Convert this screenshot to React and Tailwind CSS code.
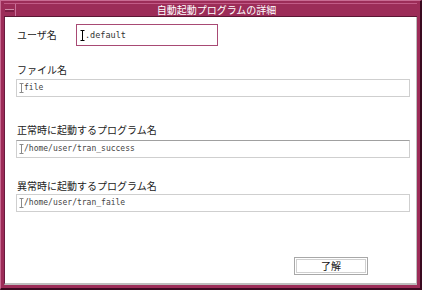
import React from "react";

const cjk = { fontFamily: '"Noto Sans CJK JP", "Noto Sans", sans-serif' };
const mono = { fontFamily: '"DejaVu Sans Mono", "Liberation Mono", monospace' };

function Beam({ color = "#000", h = 11 }) {
  return (
    <svg width="5" height={h} viewBox={`0 0 5 ${h}`} className="shrink-0">
      <path d={`M0.5 0.5H4.5M2.5 0.5V${h - 0.5}M0.5 ${h - 0.5}H4.5`} stroke={color} strokeWidth="1" fill="none" />
    </svg>
  );
}

function Field({ value, top }) {
  return (
    <div
      className={`ml-[11px] mr-[6px] h-[18px] flex items-center pl-[2px] bg-white border border-[#cfcfcf] ${top}`}
    >
      <Beam color="#8a8a8a" h={10} />
      <span className="text-[8px] text-[#444] leading-none" style={mono}>
        {value}
      </span>
    </div>
  );
}

export default function App() {
  return (
    <div className="w-[422px] h-[290px] flex flex-col bg-[#9c2c58] border-t border-l border-[#c86a92] border-r-[2px] border-b-[2px] border-r-[#3a0a20] border-b-[#3a0a20] pl-[3px] pr-[3px] pt-[2px] pb-[3px]">
      {/* title bar */}
      <div className="h-[14px] flex border-t border-[#c25a86] border-b border-b-[#5a1634] bg-[#9c2c58]">
        <div className="w-[12px] flex items-center justify-center border-r border-[#c8709a]">
          <div className="w-[9px] h-[3px] bg-[#7c1c44] border-t border-[#d08aa8]" />
        </div>
        <div className="flex-1 flex items-center justify-center text-white text-[10px] leading-none" style={cjk}>
          自動起動プログラムの詳細
        </div>
      </div>
      {/* content */}
      <div className="flex-1 flex flex-col bg-white border-l border-[#6a1a40] border-b-[2px] border-b-[#bdbdbd] border-r border-r-[#bdbdbd]">
        <div className="flex items-center mt-[7px] pl-[12px]">
          <span className="w-[59px] text-[10px] text-[#222] leading-none" style={cjk}>
            ユーザ名
          </span>
          <div className="w-[142px] h-[22px] flex items-center pl-[3px] border border-[#a84a74] bg-white">
            <Beam color="#000" h={11} />
            <span className="text-[8.5px] text-[#333] leading-none" style={mono}>
              .default
            </span>
          </div>
        </div>

        <div className="mt-[18px] pl-[12px] h-[12px] flex items-center text-[10px] text-[#222] leading-none" style={cjk}>
          ファイル名
        </div>
        <Field value="file" top="mt-[3px]" />

        <div className="mt-[27px] pl-[12px] h-[12px] flex items-center text-[10px] text-[#222] leading-none" style={cjk}>
          正常時に起動するプログラム名
        </div>
        <Field value="/home/user/tran_success" top="mt-[4px] border-t-[#a0a0a0]" />

        <div className="mt-[22px] pl-[12px] h-[12px] flex items-center text-[10px] text-[#222] leading-none" style={cjk}>
          異常時に起動するプログラム名
        </div>
        <Field value="/home/user/tran_faile" top="mt-[2px]" />

        <div className="flex justify-end mt-[45px] pr-[48px]">
          <div className="w-[74px] h-[18px] border border-[#a8a8a8] p-[1px] bg-white">
            <div className="w-full h-full border border-[#d0d0d0] flex items-center justify-center text-[10px] text-[#111] leading-none" style={cjk}>
              了解
            </div>
          </div>
        </div>
      </div>
    </div>
  );
}
